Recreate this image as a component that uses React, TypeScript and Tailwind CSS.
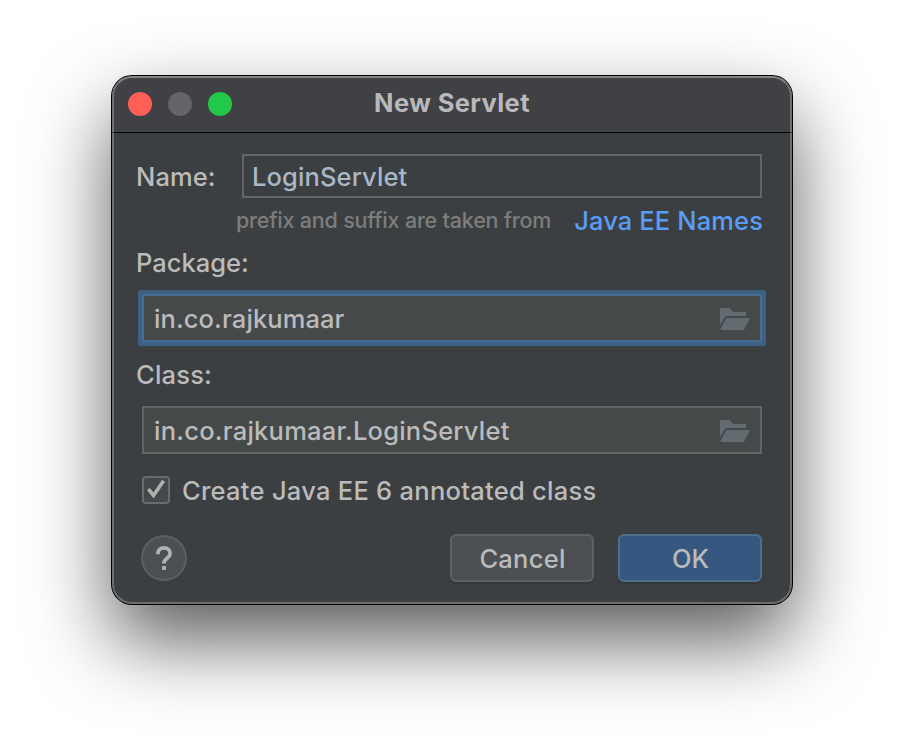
import React from "react";

function FolderIcon() {
  return (
    <svg className="mt-[2px]" width="30" height="22" viewBox="0 0 30 22" fill="#626b70">
      <path d="M0 0h9.8l3 4H26v4H5.5L0 17z" />
      <path d="M6.3 10H30l-6 12H0z" />
    </svg>
  );
}

function Field({ value, focused }: { value: string; focused?: boolean }) {
  return (
    <div
      className={
        "ml-[30px] flex h-12 w-[620px] items-center justify-between border-2 bg-[#45494a] pl-[10px] pr-[10px] " +
        (focused
          ? "rounded-[1px] border-[#466d94] tracking-[0.1px] shadow-[0_0_0_4px_#3d6185]"
          : "border-[#646464] tracking-[0.23px]")
      }
    >
      <span className="pt-px text-[#bbbbbb]">{value}</span>
      <FolderIcon />
    </div>
  );
}

export default function App() {
  return (
    <div className="flex h-[752px] w-[904px] items-start justify-center overflow-hidden bg-white pt-[76px] font-['Inter','Liberation_Sans',sans-serif] text-[25.5px] leading-8 font-[450] whitespace-nowrap text-[#bbbbbb]">
      <div className="relative flex h-[528px] w-[680px] flex-col overflow-visible rounded-[20px] bg-[#3c3f41] shadow-[0_0_0_1px_#000,0_36px_80px_rgba(0,0,0,0.65)]">
        <div className="flex h-[57px] shrink-0 items-center rounded-t-[20px] border-b border-black bg-[#404144] pl-4">
          <div className="flex w-[104px] gap-4">
            <span className="size-6 rounded-full bg-[#ff5f57]" />
            <span className="size-6 rounded-full bg-[#656569]" />
            <span className="size-6 rounded-full bg-[#21c84b]" />
          </div>
          <div className="w-[440px] pb-[2px] text-center font-bold tracking-[0.4px] text-[#b9b8bb]">New Servlet</div>
        </div>

        <div className="mt-[21px] flex h-11 shrink-0 items-center pl-6">
          <span className="w-[106px] pt-[2px] tracking-[0.1px]">Name:</span>
          <div className="flex h-11 w-[520px] items-center border-2 border-[#646464] pt-[2px] pl-2 tracking-[0.12px] text-[#a9b7c6]">
            LoginServlet
          </div>
        </div>

        <div className="flex h-[44px] shrink-0 items-center justify-between pr-[29px] pl-[124px]">
          <span className="text-[21.5px] tracking-[-0.2px] text-[#7d7d7d]">prefix and suffix are taken from</span>
          <span className="pt-px tracking-[0.12px] text-[#589df6]">Java EE Names</span>
        </div>

        <div className="mt-[5px] ml-6 h-8">Package:</div>
        <div className="mt-[15px]"><Field value="in.co.rajkumaar" focused /></div>
        <div className="mt-[17px] ml-6 h-8 tracking-[0.2px]">Class:</div>
        <div className="mt-[15px]"><Field value="in.co.rajkumaar.LoginServlet" /></div>

        <div className="mt-[20px] ml-[30px] flex h-8 items-center gap-3">
          <span className="flex size-7 items-center justify-center rounded-[4px] border-2 border-[#6b6b6b] bg-[#43494a]">
            <svg width="24" height="24" viewBox="0 0 24 24" fill="none" stroke="#b0b0b0" strokeWidth="3.6">
              <path d="M4.4 11l5.1 6.4L19.6 2.8" />
            </svg>
          </span>
          <span className="pt-px tracking-[0.27px]">Create Java EE 6 annotated class</span>
        </div>

        <div className="mt-[28px] flex h-12 items-center pr-[30px] pl-[29px]">
          <span className="flex size-[46px] items-center justify-center rounded-full border-2 border-[#5e6060] bg-[#4c5052]">
            <svg width="18" height="26" viewBox="0 0 18 26" fill="none" stroke="#afb1b3" strokeWidth="3.8">
              <path d="M2.9 9.2C2.9 5.2 5.3 2.9 9 2.9s6.1 2.3 6.1 5.5c0 4.6-6.1 4.6-6.1 10" />
              <path d="M9 21v4" />
            </svg>
          </span>
          <div className="ml-auto flex gap-6">
            <span className="flex h-12 w-36 items-center justify-center rounded-[6px] border-2 border-[#5e6060] bg-[#4c5052] pt-[2px] pl-px tracking-[0.25px] shadow-[0_2px_1px_#35383a]">Cancel</span>
            <span className="flex h-12 w-36 items-center justify-center rounded-[6px] border-2 border-[#4c708c] bg-[#365880] pt-[2px] pl-px shadow-[0_2px_1px_#35383a]">OK</span>
          </div>
        </div>
        <div className="pointer-events-none absolute inset-0 rounded-[20px] border-2 border-white/25 border-t-white/35" />
      </div>
    </div>
  );
}
